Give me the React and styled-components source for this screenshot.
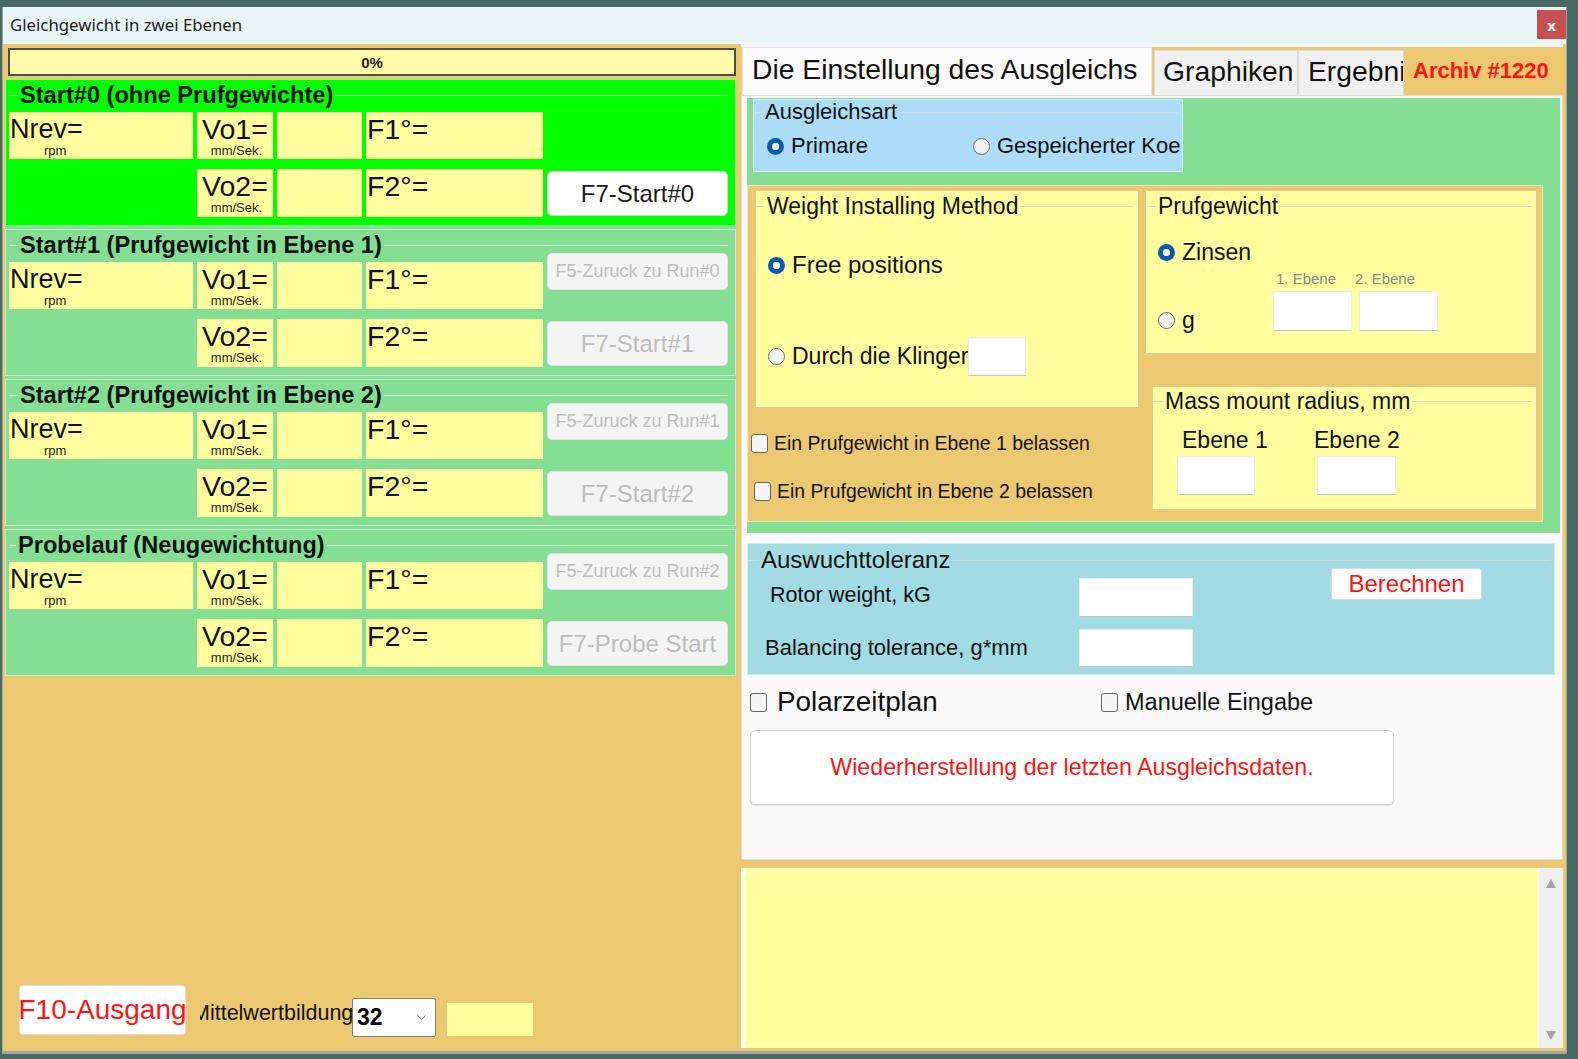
import React from 'react';
import styled, { createGlobalStyle, css } from 'styled-components';
import { ChevronDown } from 'lucide-react';

const C = {
  page: '#4a6962',
  tan: '#ecc970',
  yellow: '#ffffa0',
  green: '#00ff00',
  lgreen: '#84de94',
  blue: '#acdcf7',
  cyan: '#a1dce4',
  red: '#ff1414',
};

const GlobalStyle = createGlobalStyle`
  * { box-sizing: border-box; }
  html, body { margin: 0; padding: 0; }
  body {
    background: ${C.page};
    font-family: "Liberation Sans", Arial, sans-serif;
    color: #111;
    width: 1578px;
    height: 1059px;
    overflow: hidden;
  }
`;

const Window = styled.div`
  margin: 7px 0 0 2px;
  width: 1565px;
  height: 1047px;
  display: flex;
  flex-direction: column;
  background: ${C.tan};
  border: 1px solid #9aa7a3;
  border-top: none;
  border-bottom: 3px solid #a3a8a6;
`;

const TitleBar = styled.div`
  height: 36px;
  flex: none;
  display: flex;
  align-items: flex-start;
  justify-content: space-between;
  background: #e7f6f3;
  padding-left: 7px;
`;

const Title = styled.div`
  font-family: "Noto Sans", "Open Sans", sans-serif;
  font-size: 16.8px;
  line-height: 36px;
  color: #1b1b1b;
`;

const CloseButton = styled.div`
  width: 29px;
  height: 29px;
  margin-top: 3px;
  background: #c65050;
  color: #fff;
  display: flex;
  align-items: center;
  justify-content: center;
  font-family: "Noto Sans", sans-serif;
  font-weight: 700;
  font-size: 15px;
`;

const Client = styled.div`
  flex: 1;
  display: flex;
  min-height: 0;
  border-top: 1px solid #f4f4f4;
`;

/* ---------- left panel ---------- */

const LeftPanel = styled.div`
  width: 735px;
  flex: none;
  display: flex;
  flex-direction: column;
  padding: 4px 0 0 2px;
`;

const Progress = styled.div`
  margin-left: 3px;
  width: 728px;
  height: 28px;
  border: 2px solid #4e4e4e;
  background: #fffba8;
  display: flex;
  align-items: center;
  justify-content: center;
  font-weight: 700;
  font-size: 15px;
  color: #222;
`;

const SectionStack = styled.div`
  margin-top: 3px;
  width: 731px;
  display: flex;
  flex-direction: column;
  gap: 3px;
  background: ${C.lgreen};
`;

const Section = styled.div`
  height: 147px;
  background: ${p => p.$bg};
  padding: 0 8px 0 4px;
  box-shadow: inset 0 0 0 1px rgba(255, 255, 255, 0.5);
`;

const Legend = styled.div`
  display: flex;
  align-items: center;
  height: ${p => p.$h}px;
  font-size: ${p => p.$size}px;
  font-weight: ${p => (p.$bold ? 700 : 400)};
  line-height: 1;
  color: #111;
  white-space: nowrap;
  &::before {
    content: '';
    flex: none;
    width: ${p => p.$stub}px;
    height: 1px;
    margin-right: 2px;
    background: ${p => p.$line || '#d8d8d8'};
  }
  &::after {
    content: '';
    flex: 1;
    height: 1px;
    margin-left: 2px;
    background: ${p => p.$line || '#d8d8d8'};
  }
`;

const SectionBody = styled.div`
  display: flex;
`;

const Fields = styled.div`
  display: grid;
  grid-template-columns: 184px 76px 85px 177px;
  grid-template-rows: 47px 48px;
  column-gap: 4px;
  row-gap: 10px;
`;

const Cell = styled.div`
  background: ${p => (p.$empty ? 'transparent' : C.yellow)};
  display: flex;
  flex-direction: column;
  padding: 3px 0 0 ${p => p.$pl || 1}px;
  min-width: 0;
`;

const Big = styled.div`
  font-size: ${p => p.$size || 28}px;
  line-height: 28px;
  color: #111;
  white-space: nowrap;
`;

const Unit = styled.div`
  font-size: 13px;
  line-height: 13px;
  margin-top: 1px;
  color: #222;
  white-space: nowrap;
  ${p =>
    p.$center
      ? css`text-align: center; margin-left: ${-p.$shift}px;`
      : css`padding-left: ${p.$pl}px;`}
`;

const SideCol = styled.div`
  width: 181px;
  margin-left: 4px;
  margin-top: -9px;
  display: flex;
  flex-direction: column;
  gap: 31px;
`;

const SideButton = styled.div`
  height: ${p => p.$h}px;
  border-radius: 5px;
  display: flex;
  align-items: center;
  justify-content: center;
  white-space: nowrap;
  overflow: hidden;
  font-size: ${p => p.$size}px;
  visibility: ${p => (p.$hidden ? 'hidden' : 'visible')};
  ${p =>
    p.$disabled
      ? css`background: #f4f4f4; color: #bdbdbd; border: 1px solid #e3e3e3;`
      : css`background: #fff; color: #1a1a1a; border: 1px solid #d6d6d6;`}
`;

const BottomBar = styled.div`
  margin-top: auto;
  margin-bottom: 14px;
  padding-left: 14px;
  display: flex;
  align-items: flex-start;
`;

const ExitButton = styled.div`
  width: 167px;
  height: 50px;
  background: #fff;
  border: 1px solid #dedede;
  border-radius: 4px;
  color: ${C.red};
  font-size: 28px;
  display: flex;
  align-items: center;
  justify-content: center;
  white-space: nowrap;
  overflow: hidden;
`;

const AvgLabel = styled.div`
  width: 152px;
  margin: 15px 0 0 14px;
  font-size: 21.5px;
  line-height: 26px;
  white-space: nowrap;
  overflow: hidden;
  color: #111;
  & > span {
    display: inline-block;
    margin-left: -8px;
  }
`;

const SelectBox = styled.div`
  width: 84px;
  height: 39px;
  margin-top: 13px;
  background: #fff;
  border: 1px solid #7d7d7d;
  border-radius: 2px;
  display: flex;
  align-items: center;
  justify-content: space-between;
  padding: 0 6px 0 4px;
  font-weight: 700;
  font-size: 23px;
  color: #000;
`;

const YellowBox = styled.div`
  width: 86px;
  height: 33px;
  margin: 18px 0 0 11px;
  background: ${C.yellow};
`;

/* ---------- right panel ---------- */

const RightPanel = styled.div`
  flex: 1;
  display: flex;
  flex-direction: column;
  padding: 0 3px;
  min-width: 0;
`;

const TabStrip = styled.div`
  height: 51px;
  flex: none;
  display: flex;
  align-items: flex-end;
  background: linear-gradient(to bottom, #f6f6f6 0 3px, ${C.tan} 3px);
`;

const Tab = styled.div`
  flex: none;
  width: ${p => p.$w}px;
  height: ${p => (p.$active ? 48 : 45)}px;
  margin-left: ${p => p.$ml || 0}px;
  padding: 0 0 4px ${p => p.$pl}px;
  display: flex;
  align-items: center;
  font-size: 28.3px;
  white-space: nowrap;
  overflow: hidden;
  color: #111;
  background: ${p => (p.$active ? '#fbfbfb' : '#f1f1f1')};
  border: 1px solid ${p => (p.$active ? '#e6e6e6' : '#d9d9d9')};
  border-bottom: none;
`;

const Archiv = styled.div`
  align-self: flex-start;
  margin-top: 8px;
  width: 156px;
  height: 38px;
  background: ${C.tan};
  color: ${C.red};
  font-weight: 700;
  font-size: 22px;
  display: flex;
  align-items: center;
  padding-left: 9px;
  white-space: nowrap;
`;

const Pane = styled.div`
  height: 765px;
  flex: none;
  background: #f9f9f9;
  border: 1px solid #dcdcdc;
  display: flex;
  flex-direction: column;
`;

const GreenArea = styled.div`
  margin: 2px 2px 0 5px;
  height: 435px;
  background: ${C.lgreen};
  padding-top: 1px;
`;

const Group = styled.div`
  flex: none;
  background: ${p => p.$bg};
  box-shadow: inset 0 0 0 1px rgba(255, 255, 255, 0.55);
  width: ${p => (p.$w ? `${p.$w}px` : 'auto')};
  height: ${p => p.$h}px;
  margin: ${p => p.$m || '0'};
  padding-right: 4px;
`;

const Row = styled.div`
  display: flex;
  align-items: center;
  height: ${p => p.$h || 28}px;
  margin-top: ${p => p.$mt || 0}px;
  padding-left: ${p => p.$pl || 0}px;
`;

const Option = styled.div`
  display: flex;
  align-items: center;
  gap: ${p => (p.$gap != null ? p.$gap : 7)}px;
  width: ${p => (p.$w ? `${p.$w}px` : 'auto')};
  font-size: ${p => p.$size}px;
  color: #111;
  white-space: nowrap;
  flex: none;
`;

const Radio = styled.span`
  width: 17px;
  height: 17px;
  border-radius: 50%;
  flex: none;
  ${p =>
    p.$on
      ? css`background: radial-gradient(circle at center, #fff 0 3.4px, #0a5bb0 4px);`
      : css`background: #f1f1f1; border: 1px solid #6e6e6e;`}
`;

const Check = styled.span`
  width: 17px;
  height: 19px;
  flex: none;
  border: 1px solid #656565;
  border-radius: 3px;
  background: #f5f5f5;
`;

const Field = styled.div`
  flex: none;
  width: ${p => p.$w}px;
  height: ${p => p.$h}px;
  background: #fff;
  border: 1px solid #ececec;
  border-bottom-color: #c4c4c4;
`;

const TanBox = styled.div`
  margin-top: 13px;
  width: 796px;
  height: 337px;
  background: ${C.tan};
  box-shadow: inset 0 0 0 1px rgba(255, 255, 255, 0.5);
  padding: 6px 7px 0 4px;
  display: grid;
  grid-template-columns: 387px 390px;
  column-gap: 8px;
  align-items: start;
`;

const Col = styled.div`
  display: flex;
  flex-direction: column;
`;

const CheckRow = styled.div`
  display: flex;
  align-items: center;
  gap: 6px;
  height: 20px;
  margin-top: ${p => p.$mt}px;
  margin-left: ${p => p.$ml}px;
  font-size: 19.4px;
  white-space: nowrap;
  color: #111;
`;

const GRow = styled.div`
  display: flex;
  margin-top: 5px;
  padding-left: 12px;
`;

const GOption = styled(Option)`
  align-self: flex-start;
  margin-top: 36px;
`;

const SmallCol = styled.div`
  display: flex;
  flex-direction: column;
  margin-right: 7px;
`;

const SmallLabel = styled.div`
  height: 20px;
  font-size: 15px;
  line-height: 16px;
  color: #8a8a8a;
  margin-left: ${p => p.$ml}px;
  white-space: nowrap;
`;

const MassGrid = styled.div`
  display: grid;
  grid-template-columns: 140px 140px;
  padding-left: 24px;
  margin-top: 10px;
`;

const MassLabel = styled.div`
  height: 31px;
  font-size: 23px;
  line-height: 30px;
  margin-left: ${p => p.$ml}px;
  white-space: nowrap;
  color: #111;
`;

const TolBody = styled.div`
  display: flex;
  align-items: flex-start;
`;

const TolForm = styled.div`
  margin-top: 1px;
  display: grid;
  grid-template-columns: 332px 114px;
  grid-template-rows: 39px 38px;
  row-gap: 12px;
`;

const TolLabel = styled.div`
  display: flex;
  align-items: center;
  padding-left: ${p => p.$indent}px;
  padding-bottom: ${p => p.$raise || 0}px;
  font-size: ${p => p.$size}px;
  color: #111;
  white-space: nowrap;
`;

const CalcButton = styled.div`
  margin: -9px 0 0 138px;
  width: 151px;
  height: 32px;
  background: #fff;
  border: 1px solid #d9d9d9;
  border-radius: 3px;
  color: ${C.red};
  font-size: 24px;
  display: flex;
  align-items: center;
  justify-content: center;
`;

const PolarRow = styled.div`
  margin: 12px 0 0 8px;
  height: 30px;
  display: flex;
  align-items: center;
`;

const BigButton = styled.div`
  margin: 13px 0 0 8px;
  width: 644px;
  height: 75px;
  background: #fff;
  border: 1px solid #cfcfcf;
  border-radius: 5px;
  box-shadow: 0 1px 1px rgba(0, 0, 0, 0.08);
  color: ${C.red};
  font-size: 23.2px;
  display: flex;
  align-items: center;
  justify-content: center;
`;

const Memo = styled.div`
  margin-top: 8px;
  height: 180px;
  display: flex;
  border-top: 1px solid #fbfbfb;
  border-left: 4px solid #fbfbfb;
`;

const MemoFill = styled.div`
  flex: 1;
  background: ${C.yellow};
`;

const ScrollBar = styled.div`
  width: 25px;
  background: #efefef;
  border-left: 1px solid #fafafa;
  display: flex;
  flex-direction: column;
  justify-content: space-between;
  align-items: center;
  padding: 10px 0 8px;
`;

const Arrow = styled.span`
  width: 0;
  height: 0;
  border-left: 5px solid transparent;
  border-right: 5px solid transparent;
  ${p =>
    p.$down
      ? css`border-top: 9px solid #a3a3a3;`
      : css`border-bottom: 9px solid #a3a3a3;`}
`;

const sections = [
  { title: 'Start#0 (ohne Prufgewichte)', bg: C.green, f5: null, f7: 'F7-Start#0', active: true, stub: 9 },
  { title: 'Start#1 (Prufgewicht in Ebene 1)', bg: C.lgreen, f5: 'F5-Zuruck zu Run#0', f7: 'F7-Start#1', stub: 9 },
  { title: 'Start#2 (Prufgewicht in Ebene 2)', bg: C.lgreen, f5: 'F5-Zuruck zu Run#1', f7: 'F7-Start#2', stub: 9 },
  { title: 'Probelauf (Neugewichtung)', bg: C.lgreen, f5: 'F5-Zuruck zu Run#2', f7: 'F7-Probe Start', stub: 7 },
];

function RunSection({ s }) {
  return (
    <Section $bg={s.bg}>
      <Legend $h={33} $size={23.6} $bold $stub={s.stub} $line="rgba(255,255,255,0.6)">
        {s.title}
      </Legend>
      <SectionBody>
        <Fields>
          <Cell>
            <Big $size={27}>Nrev=</Big>
            <Unit $pl={34}>rpm</Unit>
          </Cell>
          <Cell $pl={5}>
            <Big $size={28.5}>Vo1=</Big>
            <Unit $center $shift={2}>mm/Sek.</Unit>
          </Cell>
          <Cell />
          <Cell>
            <Big $size={28.5}>F1°=</Big>
          </Cell>
          <Cell $empty />
          <Cell $pl={5}>
            <Big $size={28.5}>Vo2=</Big>
            <Unit $center $shift={2}>mm/Sek.</Unit>
          </Cell>
          <Cell />
          <Cell>
            <Big $size={28.5}>F2°=</Big>
          </Cell>
        </Fields>
        <SideCol>
          <SideButton $h={37} $size={18} $disabled $hidden={!s.f5}>
            {s.f5 || ' '}
          </SideButton>
          <SideButton $h={45} $size={24} $disabled={!s.active}>
            {s.f7}
          </SideButton>
        </SideCol>
      </SectionBody>
    </Section>
  );
}

export default function App() {
  return (
    <>
      <GlobalStyle />
      <Window>
        <TitleBar>
          <Title>Gleichgewicht in zwei Ebenen</Title>
          <CloseButton>x</CloseButton>
        </TitleBar>
        <Client>
          <LeftPanel>
            <Progress>0%</Progress>
            <SectionStack>
              {sections.map(s => (
                <RunSection key={s.title} s={s} />
              ))}
            </SectionStack>
            <BottomBar>
              <ExitButton>F10-Ausgang</ExitButton>
              <AvgLabel>
                <span>Mittelwertbildung</span>
              </AvgLabel>
              <SelectBox>
                <span>32</span>
                <ChevronDown size={15} color="#6b6b6b" strokeWidth={1.6} />
              </SelectBox>
              <YellowBox />
            </BottomBar>
          </LeftPanel>

          <RightPanel>
            <TabStrip>
              <Tab $active $w={410} $ml={1} $pl={9}>Die Einstellung des Ausgleichs</Tab>
              <Tab $w={144} $ml={2} $pl={8}>Graphiken</Tab>
              <Tab $w={106} $pl={9}>Ergebni</Tab>
              <Archiv>Archiv #1220</Archiv>
            </TabStrip>
            <Pane>
              <GreenArea>
                <Group $bg={C.blue} $w={430} $h={73} $m="0 0 0 6px">
                  <Legend $h={26} $size={22} $stub={10}>Ausgleichsart</Legend>
                  <Row $h={26} $mt={8} $pl={14}>
                    <Option $w={206} $size={22}>
                      <Radio $on />
                      Primare
                    </Option>
                    <Option $size={22}>
                      <Radio />
                      Gespeicherter Koe
                    </Option>
                  </Row>
                </Group>

                <TanBox>
                  <Col>
                    <Group $bg={C.yellow} $w={382} $h={216} $m="0 0 0 5px">
                      <Legend $h={30} $size={23} $stub={9}>Weight Installing Method</Legend>
                      <Row $h={30} $mt={29} $pl={12}>
                        <Option $size={24}>
                          <Radio $on />
                          Free positions
                        </Option>
                      </Row>
                      <Row $h={39} $mt={57} $pl={12}>
                        <Option $size={23}>
                          <Radio />
                          Durch die Klinger
                        </Option>
                        <Field $w={58} $h={39} />
                      </Row>
                    </Group>
                    <CheckRow $mt={26} $ml={0}>
                      <Check />
                      Ein Prufgewicht in Ebene 1 belassen
                    </CheckRow>
                    <CheckRow $mt={28} $ml={3}>
                      <Check />
                      Ein Prufgewicht in Ebene 2 belassen
                    </CheckRow>
                  </Col>

                  <Col>
                    <Group $bg={C.yellow} $h={162}>
                      <Legend $h={30} $size={23} $stub={10}>Prufgewicht</Legend>
                      <Row $h={28} $mt={17} $pl={12}>
                        <Option $size={23}>
                          <Radio $on />
                          Zinsen
                        </Option>
                      </Row>
                      <GRow>
                        <GOption $w={115} $size={23}>
                          <Radio />
                          g
                        </GOption>
                        <SmallCol>
                          <SmallLabel $ml={3}>1. Ebene</SmallLabel>
                          <Field $w={79} $h={40} />
                        </SmallCol>
                        <SmallCol>
                          <SmallLabel $ml={-4}>2. Ebene</SmallLabel>
                          <Field $w={79} $h={40} />
                        </SmallCol>
                      </GRow>
                    </Group>
                    <Group $bg={C.yellow} $h={122} $m="34px 0 0 7px">
                      <Legend $h={28} $size={23} $stub={10}>Mass mount radius, mm</Legend>
                      <MassGrid>
                        <div>
                          <MassLabel $ml={5}>Ebene 1</MassLabel>
                          <Field $w={78} $h={39} />
                        </div>
                        <div>
                          <MassLabel $ml={-3}>Ebene 2</MassLabel>
                          <Field $w={79} $h={39} />
                        </div>
                      </MassGrid>
                    </Group>
                  </Col>
                </TanBox>
              </GreenArea>

              <Group $bg={C.cyan} $h={132} $m="10px 7px 0 5px">
                <Legend $h={34} $size={24} $stub={12}>Auswuchttoleranz</Legend>
                <TolBody>
                  <TolForm>
                    <TolLabel $indent={23} $size={21.6} $raise={6}>Rotor weight, kG</TolLabel>
                    <Field $w={114} $h={39} />
                    <TolLabel $indent={18} $size={22}>Balancing tolerance, g*mm</TolLabel>
                    <Field $w={114} $h={38} />
                  </TolForm>
                  <CalcButton>Berechnen</CalcButton>
                </TolBody>
              </Group>

              <PolarRow>
                <Option $w={351} $gap={10} $size={27.8}>
                  <Check />
                  Polarzeitplan
                </Option>
                <Option $gap={7} $size={23.5}>
                  <Check />
                  Manuelle Eingabe
                </Option>
              </PolarRow>

              <BigButton>Wiederherstellung der letzten Ausgleichsdaten.</BigButton>
            </Pane>

            <Memo>
              <MemoFill />
              <ScrollBar>
                <Arrow />
                <Arrow $down />
              </ScrollBar>
            </Memo>
          </RightPanel>
        </Client>
      </Window>
    </>
  );
}
